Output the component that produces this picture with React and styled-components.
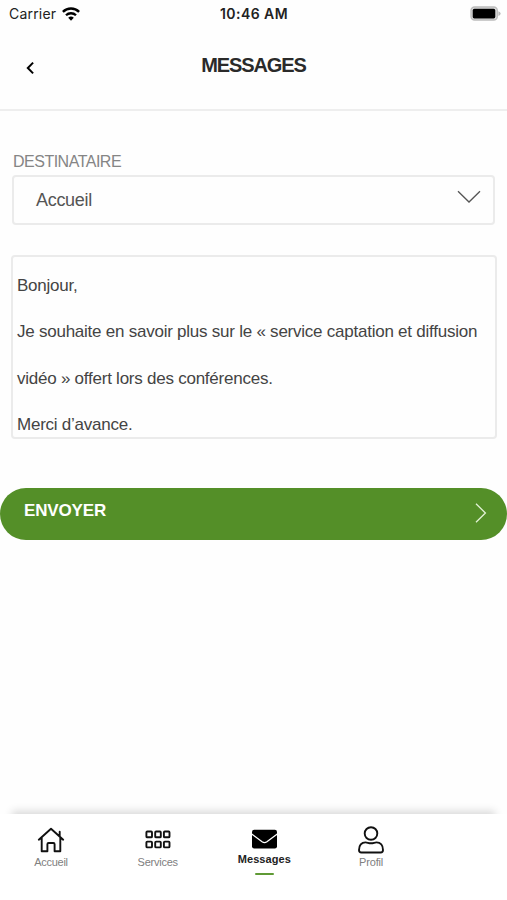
import { useState } from "react";
import styled, { createGlobalStyle } from "styled-components";

const tabs = [
	{ id: "home", label: "Accueil", spacing: "-0.3px" },
	{ id: "services", label: "Services", spacing: "-0.25px" },
	{ id: "messages", label: "Messages", spacing: "0.1px" },
	{ id: "profile", label: "Profil", spacing: "-0.15px" },
];

const firstMessage = `Bonjour,
Je souhaite en savoir plus sur le « service captation et diffusion
vidéo » offert lors des conférences.
Merci d’avance.`;

const TabIcon = ({ id }) => {
	if (id === "home") {
		return (
			<Icon width="28" height="28" viewBox="0 0 28 28">
				<path d="M1.8 13.7 14 2.7l12.2 11M22.7 10.2V5.7M4.7 11.5v13.8h5.7v-7.1q0-1.2 1.2-1.2h4.8q1.2 0 1.2 1.2v7.1h5.7V11.5" />
			</Icon>
		);
	}
	if (id === "services") {
		return (
			<Icon width="28" height="28" viewBox="0 0 28 28">
				{[5.5, 15.6].map((y) =>
					[2.4, 11.2, 19.9].map((x) => (
						<rect key={`${x}-${y}`} x={x} y={y} width="5.6" height="5.8" rx="0.9" />
					))
				)}
			</Icon>
		);
	}
	if (id === "messages") {
		return (
			<Icon width="28" height="28" viewBox="0 0 28 28">
				<rect x="2" y="3.8" width="25" height="18.7" rx="2.2" fill="#000" stroke="none" />
				<path d="m1.7 8 10.4 7.8q2.4 1.7 4.8 0L27.3 8" stroke="#fff" strokeWidth="1.3" />
			</Icon>
		);
	}
	return (
		<Icon width="28" height="30" viewBox="0 0 28 30">
			<circle cx="14" cy="8.5" r="6.3" />
			<path d="M4.4 27.5h19.2q2.4 0 2.4-2.5c0-4.6-2.5-7.6-6.5-7.6-1.9 0-3 .9-5.5.9s-3.6-.9-5.5-.9c-4 0-6.5 3-6.5 7.6q0 2.5 2.4 2.5Z" />
		</Icon>
	);
};

const App = () => {
	const [message, setMessage] = useState(firstMessage);
	const [activeTab, setActiveTab] = useState("messages");

	return (
		<>
			<GlobalStyle />
			<Screen>
				<StatusBar>
					<Carrier>
						Carrier
						<svg width="18" height="14" viewBox="0 0 18 14">
							<path d="M.9 4.9a11.5 11.5 0 0 1 16.2 0" fill="none" stroke="#000" strokeWidth="2.4" />
							<path d="M4 8.3a7.1 7.1 0 0 1 10 0" fill="none" stroke="#000" strokeWidth="2.3" />
							<path d="M6.2 10.8a4 4 0 0 1 5.6 0L9 13.7Z" />
						</svg>
					</Carrier>
					<Clock>10:46 AM</Clock>
					<Battery width="31" height="15" viewBox="0 0 31 15">
						<rect x="1" y="1" width="26.3" height="13" rx="3.6" fill="#ddd" stroke="#bcbcbc" strokeWidth="1.3" />
						<rect x="2.7" y="2.8" width="22.6" height="9.6" rx="1.6" />
						<path d="M28.4 5.3q2.2.7 2.2 2.3t-2.2 2.3Z" fill="#b9b9b9" />
					</Battery>
				</StatusBar>
				<Header>
					<BackButton aria-label="Retour">
						<svg width="10" height="14" viewBox="0 0 10 14">
							<path d="M8.1 1.6 2.8 7l5.3 5.4" fill="none" stroke="#000" strokeWidth="2" />
						</svg>
					</BackButton>
					<Title>MESSAGES</Title>
				</Header>
				<Form>
					<Label>DESTINATAIRE</Label>
					<Select>
						Accueil
						<svg width="24" height="14" viewBox="0 0 24 14">
							<path d="M1 1.2 12 12 23 1.2" fill="none" stroke="#555" strokeWidth="1.3" />
						</svg>
					</Select>
					<Message
						value={message}
						spellCheck={false}
						onChange={(e) => setMessage(e.target.value)}
					/>
				</Form>
				<SendButton>
					ENVOYER
					<svg width="12" height="20" viewBox="0 0 12 20">
						<path d="M1 .8 10.4 10 1 19.2" fill="none" stroke="#e3f2d6" strokeWidth="1.3" />
					</svg>
				</SendButton>
				<TabBar>
					{tabs.map((tab) => (
						<Tab
							key={tab.id}
							$active={tab.id === activeTab}
							onClick={() => setActiveTab(tab.id)}
						>
							<TabIcon id={tab.id} />
							<TabLabel $active={tab.id === activeTab} $spacing={tab.spacing}>
								{tab.label}
							</TabLabel>
							{tab.id === activeTab && <Underline />}
						</Tab>
					))}
				</TabBar>
			</Screen>
		</>
	);
};

export default App;

const GlobalStyle = createGlobalStyle`
	* {
		box-sizing: border-box;
	}
	body {
		margin: 0;
		background: #fff;
		font-family: "Liberation Sans", Arial, sans-serif;
	}
	button {
		border: none;
		background: none;
		padding: 0;
		font-family: inherit;
		cursor: pointer;
	}
`;
const Screen = styled.div`
	width: 100%;
	height: 900px;
	display: flex;
	flex-direction: column;
	overflow: hidden;
	background: #fefefe;
`;
const StatusBar = styled.div`
	height: 28px;
	flex-shrink: 0;
	display: grid;
	grid-template-columns: 1fr auto 1fr;
	align-items: center;
	padding: 0 6px 1px 9px;
	font-family: Inter, sans-serif;
	font-size: 14px;
	color: #222;
`;
const Carrier = styled.div`
	display: flex;
	align-items: center;
	gap: 6px;
	letter-spacing: 0.2px;
`;
const Clock = styled.div`
	margin-left: -2px;
	font-weight: 600;
	letter-spacing: 0.45px;
`;
const Battery = styled.svg`
	justify-self: end;
`;
const Header = styled.header`
	height: 83px;
	flex-shrink: 0;
	display: grid;
	grid-template-columns: 60px 1fr 60px;
	align-items: start;
	border-bottom: 2px solid #eee;
`;
const BackButton = styled.button`
	height: 14px;
	margin-top: 33px;
	display: flex;
	justify-content: center;
`;
const Title = styled.h1`
	margin: 25px 0 0;
	font-size: 20px;
	line-height: 24px;
	letter-spacing: -1.1px;
	text-align: center;
	color: #2a2a2a;
`;
const Form = styled.div`
	display: flex;
	flex-direction: column;
	padding: 41px 10px 0 11px;
`;
const Label = styled.label`
	margin-left: 2px;
	font-size: 16px;
	line-height: 20px;
	letter-spacing: -0.5px;
	color: #858585;
`;
const Select = styled.div`
	height: 50px;
	margin: 3px 2px 0 1px;
	padding: 0 12px 0 22px;
	display: flex;
	align-items: center;
	justify-content: space-between;
	border: 2px solid #ebebeb;
	border-radius: 4px;
	font-size: 18px;
	letter-spacing: -0.3px;
	color: #555;
	svg {
		margin-bottom: 7px;
	}
`;
const Message = styled.textarea`
	height: 184px;
	margin-top: 30px;
	padding: 6px 4px 0;
	border: 2px solid #ebebeb;
	border-radius: 4px;
	outline: none;
	resize: none;
	overflow: hidden;
	background: transparent;
	font-family: inherit;
	font-size: 17px;
	line-height: 46.4px;
	letter-spacing: -0.24px;
	color: #444;
`;
const SendButton = styled.button`
	height: 52px;
	flex-shrink: 0;
	margin-top: 49px;
	padding: 0 20px 6px 24px;
	display: flex;
	align-items: center;
	justify-content: space-between;
	border-radius: 26px;
	background: #548f28;
	font-size: 17px;
	font-weight: 700;
	line-height: 20px;
	letter-spacing: -0.15px;
	color: #fff;
	svg {
		margin-top: 4px;
	}
`;
const TabBar = styled.nav`
	height: 86px;
	flex-shrink: 0;
	margin-top: auto;
	padding: 11px 0 0 21px;
	display: flex;
	gap: 46.7px;
	background: #fff;
	box-shadow: 0 -15px 8px -12px rgba(0, 0, 0, 0.15);
`;
const Tab = styled.button`
	width: 60px;
	display: flex;
	flex-direction: column;
	align-items: center;
`;
const Icon = styled.svg`
	height: 30px;
	flex-shrink: 0;
	fill: none;
	stroke: #111;
	stroke-width: 1.9;
	stroke-linejoin: round;
	stroke-linecap: round;
`;
const TabLabel = styled.span`
	margin-top: ${(props) => (props.$active ? `-2px` : `1px`)};
	font-size: 11px;
	line-height: 13px;
	letter-spacing: ${(props) => props.$spacing};
	font-weight: ${(props) => (props.$active ? 700 : 400)};
	color: ${(props) => (props.$active ? `#222` : `#808080`)};
`;
const Underline = styled.span`
	width: 19px;
	height: 2px;
	margin-top: 7px;
	border-radius: 1px;
	background: #5f9a35;
`;
